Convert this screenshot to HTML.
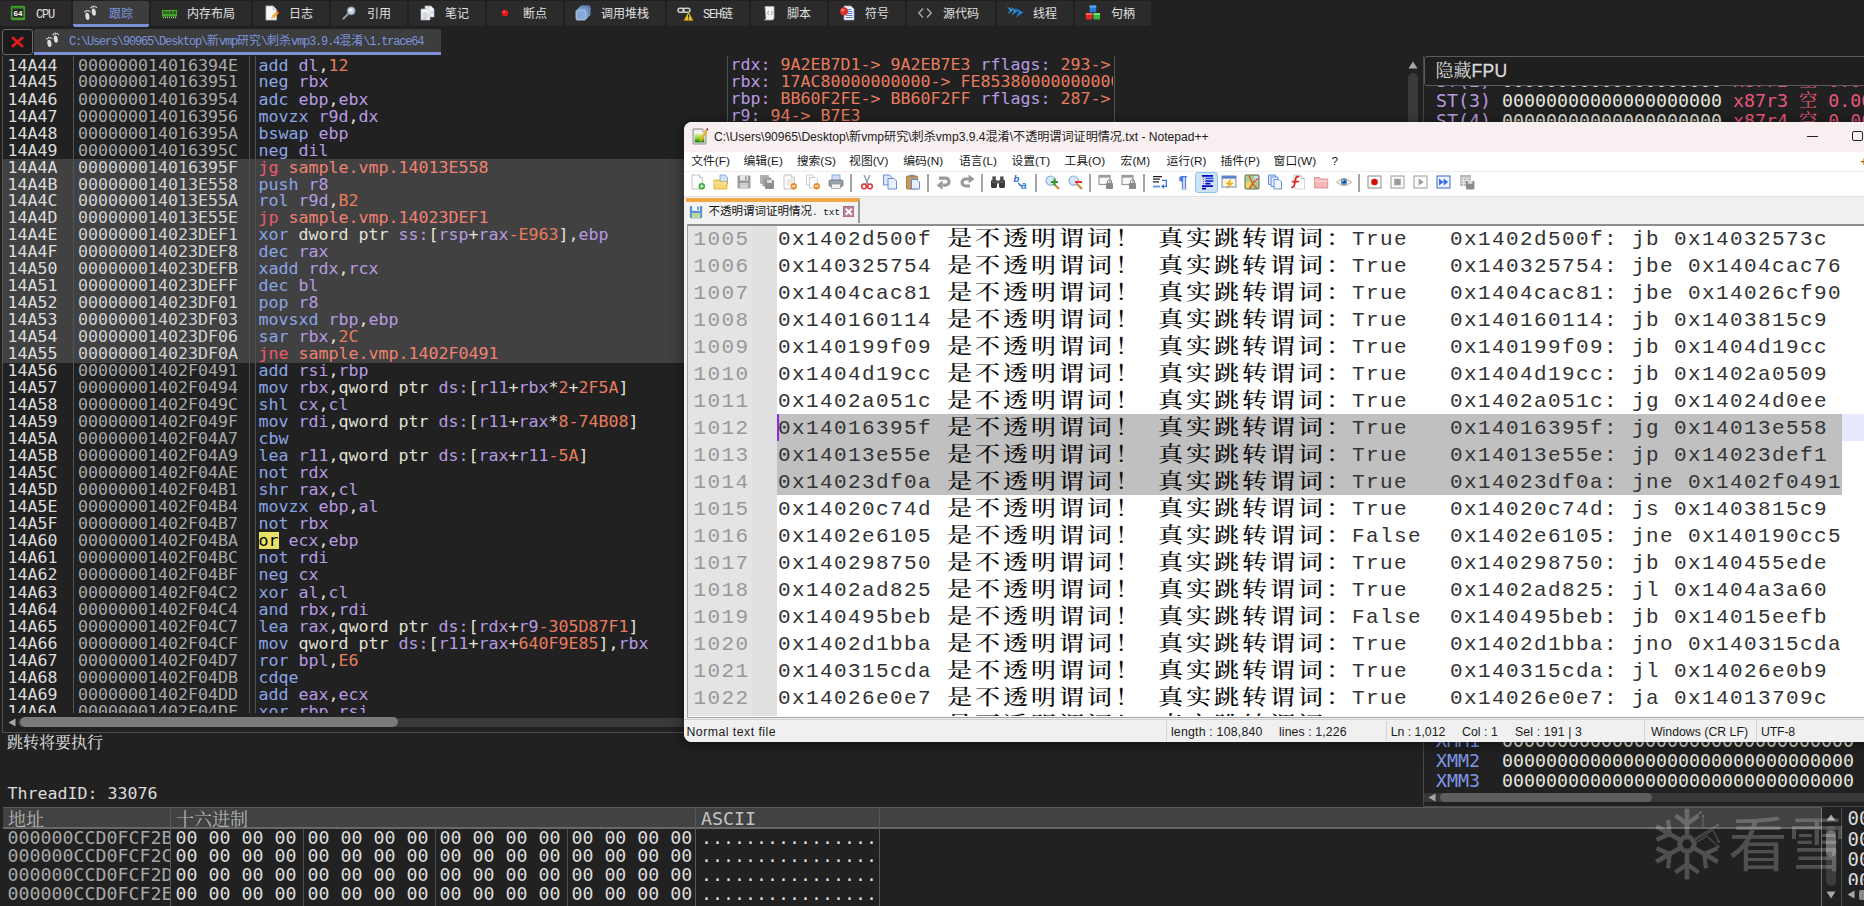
<!DOCTYPE html><html lang="zh"><head><meta charset="utf-8"><title>x64dbg trace</title><style>
*{box-sizing:border-box;margin:0;padding:0}
html,body{width:1864px;height:906px;overflow:hidden;background:#212121}
body{position:relative;font-family:"DejaVu Sans Mono","Liberation Mono","Noto Sans CJK SC",monospace;color:#e0e0e0}
.a{position:absolute}
.m{position:absolute;white-space:pre;font-family:"DejaVu Sans Mono","Liberation Mono","Noto Sans CJK SC",monospace;font-size:16.61px;line-height:17px;height:17px;overflow:visible}
.m2{position:absolute;white-space:pre;font-family:"DejaVu Sans Mono","Liberation Mono","Noto Serif CJK SC",monospace;font-size:18.27px;line-height:20px;height:20px}
.b{color:#8aa5e6}.p{color:#b79be0}.o{color:#e87c5e}.w{color:#e2e2d6}.j{color:#ea5c6c}.t{color:#f08272}.g{color:#a8a8a8}.i{color:#dcdcdc}.gs{color:#d2d2d2}
.hl{background:#e6e268;color:#000;display:inline-block;height:17px;line-height:17px;vertical-align:top}
.tab{position:absolute;top:1px;height:25px;background:#2b2b2b;border-radius:2px}
.tab.sel{background:#3d3d3d;border-bottom:3px solid #7d90d6;height:26px}
.tt{position:absolute;top:0;height:25px;line-height:28.5px;font-size:12px;white-space:pre;color:#e0e0e0;font-family:"Liberation Mono","Noto Sans CJK SC",monospace}
.tt i{font-style:normal;font-size:12px;letter-spacing:-1.2px}
.ui{font-family:"Liberation Sans","Noto Sans CJK SC",sans-serif}
.np{position:absolute;white-space:pre;color:#111}
.ln{position:absolute;white-space:pre;font-family:"Liberation Mono",monospace;font-size:21px;letter-spacing:1.4px;color:#989898;line-height:27px;height:27px}
.ct{position:absolute;white-space:pre;font-family:"Liberation Mono",monospace;font-size:21px;letter-spacing:1.4px;color:#333;line-height:27px;height:27px}
.cj{position:absolute;white-space:pre;font-family:"Liberation Serif","Noto Serif CJK SC",serif;font-size:21px;letter-spacing:2.53px;color:#0c0c0c;font-weight:500;line-height:25.4px;height:27px;transform:scaleX(1.19);transform-origin:0 0}
</style></head><body>
<div class="tab" style="left:0px;width:71px"><span class="tt" style="left:36px"><i>CPU</i></span><svg class="a" style="left:10px;top:4px" width="16" height="16" viewBox="0 0 16 16"><rect x="1" y="1" width="14" height="14" rx="1" fill="#4aa832"/><path d="M0 3h16M0 6h16M0 9h16M0 12h16M3 0v16M6 0v16M9 0v16M12 0v16" stroke="#2f7a20" stroke-width="0.8"/><rect x="2.6" y="3.6" width="10.8" height="8.8" fill="#262626"/><text x="8" y="11.2" font-family="Liberation Sans,sans-serif" font-weight="bold" font-size="8" fill="#fff" text-anchor="middle">64</text></svg></div>
<div class="tab sel" style="left:73px;width:76px"><span class="tt" style="left:36px;color:#7b94de">跟踪</span><svg class="a" style="left:10px;top:4px" width="16" height="16" viewBox="0 0 16 16"><g fill="#dcdcdc"><ellipse cx="4.4" cy="11.4" rx="2" ry="3.7" transform="rotate(-10 4.4 11.4)"/><circle cx="2" cy="6.6" r="0.9"/><circle cx="3.8" cy="5.7" r="0.9"/><circle cx="5.6" cy="5.8" r="0.8"/><circle cx="7" cy="6.6" r="0.7"/><ellipse cx="10.8" cy="7.2" rx="2" ry="3.7" transform="rotate(-10 10.8 7.2)"/><circle cx="8.4" cy="2.4" r="0.9"/><circle cx="10.2" cy="1.5" r="0.9"/><circle cx="12" cy="1.6" r="0.8"/><circle cx="13.4" cy="2.4" r="0.7"/></g></svg></div>
<div class="tab" style="left:151px;width:100px"><span class="tt" style="left:36px">内存布局</span><svg class="a" style="left:10px;top:4px" width="16" height="16" viewBox="0 0 16 16"><rect x="1" y="5" width="15" height="6.5" fill="#4aa832"/><rect x="2.2" y="6.2" width="2.6" height="3" fill="#1f5a16"/><rect x="5.6" y="6.2" width="2.6" height="3" fill="#1f5a16"/><rect x="9" y="6.2" width="2.6" height="3" fill="#1f5a16"/><rect x="12.4" y="6.2" width="2.6" height="3" fill="#1f5a16"/><path d="M2 12.5h1M4 12.5h1M6 12.5h1M8 12.5h1M10 12.5h1M12 12.5h1M14 12.5h1" stroke="#8fd870" stroke-width="1.4"/></svg></div>
<div class="tab" style="left:253px;width:76px"><span class="tt" style="left:36px">日志</span><svg class="a" style="left:10px;top:4px" width="16" height="16" viewBox="0 0 16 16"><path d="M3 1h7l3.5 3.5V15H3z" fill="#f4f6f8" stroke="#b8c0c8" stroke-width="0.8"/><path d="M10 1v3.5h3.5" fill="#d8dee4" stroke="#b8c0c8" stroke-width="0.6"/><path d="M8 14l1-3 5-5 2 2-5 5z" fill="#f0a828"/><path d="M8 14l1-3 2 2z" fill="#e8d8a8"/><path d="M14 6l2 2" stroke="#d04030" stroke-width="1.6"/></svg></div>
<div class="tab" style="left:331px;width:76px"><span class="tt" style="left:36px">引用</span><svg class="a" style="left:10px;top:4px" width="16" height="16" viewBox="0 0 16 16"><circle cx="10.2" cy="5.8" r="3.8" fill="#c8d4e0" stroke="#8a96a4" stroke-width="1.2"/><circle cx="9.4" cy="5" r="1.6" fill="#eef3f8"/><path d="M7.4 8.6L2.4 13.6" stroke="#9aa0a8" stroke-width="2" stroke-linecap="round"/></svg></div>
<div class="tab" style="left:409px;width:76px"><span class="tt" style="left:36px">笔记</span><svg class="a" style="left:10px;top:4px" width="16" height="16" viewBox="0 0 16 16"><path d="M6 1h6l3 3v8H6z" fill="#f2f4f6" stroke="#aab2ba" stroke-width="0.7"/><path d="M2 4h6l3 3v8H2z" fill="#fbfcfd" stroke="#aab2ba" stroke-width="0.7"/><path d="M3.5 8h5M3.5 10h6M3.5 12h6M3.5 13.8h4" stroke="#9aa4b0" stroke-width="0.8"/><path d="M8 2.8h3M12 6h2M12 8h2" stroke="#b4bcc6" stroke-width="0.7"/></svg></div>
<div class="tab" style="left:487px;width:76px"><span class="tt" style="left:36px">断点</span><svg class="a" style="left:10px;top:4px" width="16" height="16" viewBox="0 0 16 16"><circle cx="8" cy="8" r="3.3" fill="#e01818"/><circle cx="7" cy="7" r="1.1" fill="#f87070"/></svg></div>
<div class="tab" style="left:565px;width:100px"><span class="tt" style="left:36px">调用堆栈</span><svg class="a" style="left:10px;top:4px" width="16" height="16" viewBox="0 0 16 16"><rect x="5" y="1" width="10" height="10" rx="1.5" fill="#4a6ea8" stroke="#8fb0e0" stroke-width="0.8"/><rect x="3" y="3" width="10" height="10" rx="1.5" fill="#5a80bc" stroke="#9fc0ea" stroke-width="0.8"/><rect x="1" y="5" width="10" height="10" rx="1.5" fill="#88a8d8" stroke="#c4daf4" stroke-width="0.8"/></svg></div>
<div class="tab" style="left:667px;width:82px"><span class="tt" style="left:36px"><i>SEH</i>链</span><svg class="a" style="left:10px;top:4px" width="16" height="16" viewBox="0 0 16 16"><rect x="1" y="3.2" width="6" height="4" rx="2" fill="none" stroke="#d0d0d0" stroke-width="1.5"/><rect x="6" y="3.2" width="7" height="4" rx="2" fill="none" stroke="#d0d0d0" stroke-width="1.5"/><path d="M11.5 7L16 15.4H7z" fill="#f0c828" stroke="#a88410" stroke-width="0.6"/><path d="M11.5 9.6v3" stroke="#222" stroke-width="1.2"/><circle cx="11.5" cy="14" r="0.7" fill="#222"/></svg></div>
<div class="tab" style="left:751px;width:76px"><span class="tt" style="left:36px">脚本</span><svg class="a" style="left:10px;top:4px" width="16" height="16" viewBox="0 0 16 16"><path d="M4 1.5h9v11.5a2 2 0 01-2 2H3.4a1.6 1.6 0 001.6-1.6z" fill="#f0f2f4" stroke="#b0b8c0" stroke-width="0.7"/><path d="M8 6L6.4 8 8 10M10 6l1.6 2L10 10" fill="none" stroke="#8a94a0" stroke-width="0.9"/></svg></div>
<div class="tab" style="left:829px;width:76px"><span class="tt" style="left:36px">符号</span><svg class="a" style="left:10px;top:4px" width="16" height="16" viewBox="0 0 16 16"><path d="M5 1h7l3 3v11H5z" fill="#f2f5fa" stroke="#98a8c8" stroke-width="0.7"/><path d="M8.5 4.5h4M8.5 6.5h5M8.5 8.5h5M7 10.5h6.5M7 12.5h6.5" stroke="#4a68c8" stroke-width="0.9"/><circle cx="5" cy="6.4" r="4.2" fill="#d83028"/><circle cx="3.8" cy="5" r="1.5" fill="#f08878"/></svg></div>
<div class="tab" style="left:907px;width:88px"><span class="tt" style="left:36px">源代码</span><svg class="a" style="left:10px;top:4px" width="16" height="16" viewBox="0 0 16 16"><path d="M6 3.5L1.8 8 6 12.5M10 3.5L14.2 8 10 12.5" fill="none" stroke="#a8a8a8" stroke-width="1.4"/></svg></div>
<div class="tab" style="left:997px;width:76px"><span class="tt" style="left:36px">线程</span><svg class="a" style="left:10px;top:4px" width="16" height="16" viewBox="0 0 16 16"><path d="M0 1.6l6 3.4-5.4 4.4 2.4-4z" fill="#3aa0ee"/><path d="M3.6 2l7 4-6.6 5 3-4.6z" fill="#2a90e6"/><path d="M7.6 2.6L16.4 7.4 8 13l3.8-5.4z" fill="#1c80de"/></svg></div>
<div class="tab" style="left:1075px;width:76px"><span class="tt" style="left:36px">句柄</span><svg class="a" style="left:10px;top:4px" width="16" height="16" viewBox="0 0 16 16"><rect x="4.6" y="0.6" width="6.6" height="6.6" rx="0.8" fill="#2878e0"/><rect x="0.8" y="8" width="6.6" height="6.6" rx="0.8" fill="#e02828"/><rect x="8.4" y="8" width="6.6" height="6.6" rx="0.8" fill="#38b838"/><path d="M4.6 0.6h6.6v2h-6.6z" fill="#68a8f4"/><path d="M0.8 8h6.6v2H0.8z" fill="#f46868"/><path d="M8.4 8h6.6v2H8.4z" fill="#78e078"/></svg></div>
<div class="a" style="left:2px;top:29px;width:31px;height:26px;border:1px solid #6a6a6a;border-radius:3px;background:#1b1b1b"></div>
<svg class="a" style="left:11px;top:36px" width="13" height="12" viewBox="0 0 13 12"><path d="M2 2 L11 10 M11 2 L2 10" stroke="#e01c1c" stroke-width="3" stroke-linecap="round"/></svg>
<div class="a" style="left:34px;top:29px;width:407px;height:26px;background:#3d3d3d;border-bottom:3px solid #7d90d6;border-radius:2px 2px 0 0"><span class="tt" style="left:35px;color:#7b94de;height:23px;line-height:26.5px"><i>C:\Users\90965\Desktop\</i>新<i>vmp</i>研究<i>\</i>刺杀<i>vmp3.9.4</i>混淆<i>\1.trace64</i></span><svg class="a" style="left:11px;top:3px" width="16" height="16" viewBox="0 0 16 16"><g fill="#dcdcdc"><ellipse cx="4.4" cy="11.4" rx="2" ry="3.7" transform="rotate(-10 4.4 11.4)"/><circle cx="2" cy="6.6" r="0.9"/><circle cx="3.8" cy="5.7" r="0.9"/><circle cx="5.6" cy="5.8" r="0.8"/><circle cx="7" cy="6.6" r="0.7"/><ellipse cx="10.8" cy="7.2" rx="2" ry="3.7" transform="rotate(-10 10.8 7.2)"/><circle cx="8.4" cy="2.4" r="0.9"/><circle cx="10.2" cy="1.5" r="0.9"/><circle cx="12" cy="1.6" r="0.8"/><circle cx="13.4" cy="2.4" r="0.7"/></g></svg></div>
<div class="a" id="trace" style="left:0;top:56px;width:1404px;height:657px;overflow:hidden">
<div class="a" style="left:3px;top:103px;width:1401px;height:203.5px;background:#414141"></div>
<div class="a" style="left:2px;top:0;width:1px;height:658px;background:#515151"></div>
<div class="a" style="left:73px;top:0;width:1px;height:658px;background:#515151"></div>
<div class="a" style="left:248.5px;top:0;width:1px;height:658px;background:#515151"></div>
<div class="a" style="left:254.5px;top:0;width:1px;height:658px;background:#515151"></div>
<div class="a" style="left:726.6px;top:0;width:1px;height:658px;background:#515151"></div>
<div class="a" style="left:1113.6px;top:0;width:1px;height:658px;background:#515151"></div>
<div class="m i" style="left:7.4px;top:0.5px">14A44</div><div class="m g" style="left:78px;top:0.5px">000000014016394E</div><div class="m" style="left:258.6px;top:0.5px"><span class="b">add</span> <span class="p">dl</span><span class="w">,</span><span class="o">12</span></div>
<div class="m i" style="left:7.4px;top:17.4px">14A45</div><div class="m g" style="left:78px;top:17.4px">0000000140163951</div><div class="m" style="left:258.6px;top:17.4px"><span class="b">neg</span> <span class="p">rbx</span></div>
<div class="m i" style="left:7.4px;top:34.5px">14A46</div><div class="m g" style="left:78px;top:34.5px">0000000140163954</div><div class="m" style="left:258.6px;top:34.5px"><span class="b">adc</span> <span class="p">ebp</span><span class="w">,</span><span class="p">ebx</span></div>
<div class="m i" style="left:7.4px;top:51.5px">14A47</div><div class="m g" style="left:78px;top:51.5px">0000000140163956</div><div class="m" style="left:258.6px;top:51.5px"><span class="b">movzx</span> <span class="p">r9d</span><span class="w">,</span><span class="p">dx</span></div>
<div class="m i" style="left:7.4px;top:68.5px">14A48</div><div class="m g" style="left:78px;top:68.5px">000000014016395A</div><div class="m" style="left:258.6px;top:68.5px"><span class="b">bswap</span> <span class="p">ebp</span></div>
<div class="m i" style="left:7.4px;top:85.5px">14A49</div><div class="m g" style="left:78px;top:85.5px">000000014016395C</div><div class="m" style="left:258.6px;top:85.5px"><span class="b">neg</span> <span class="p">dil</span></div>
<div class="m i" style="left:7.4px;top:102.5px">14A4A</div><div class="m gs" style="left:78px;top:102.5px">000000014016395F</div><div class="m" style="left:258.6px;top:102.5px"><span class="j">jg</span> <span class="t">sample.vmp.14013E558</span></div>
<div class="m i" style="left:7.4px;top:119.5px">14A4B</div><div class="m gs" style="left:78px;top:119.5px">000000014013E558</div><div class="m" style="left:258.6px;top:119.5px"><span class="b">push</span> <span class="p">r8</span></div>
<div class="m i" style="left:7.4px;top:136.4px">14A4C</div><div class="m gs" style="left:78px;top:136.4px">000000014013E55A</div><div class="m" style="left:258.6px;top:136.4px"><span class="b">rol</span> <span class="p">r9d</span><span class="w">,</span><span class="o">B2</span></div>
<div class="m i" style="left:7.4px;top:153.4px">14A4D</div><div class="m gs" style="left:78px;top:153.4px">000000014013E55E</div><div class="m" style="left:258.6px;top:153.4px"><span class="j">jp</span> <span class="t">sample.vmp.14023DEF1</span></div>
<div class="m i" style="left:7.4px;top:170.4px">14A4E</div><div class="m gs" style="left:78px;top:170.4px">000000014023DEF1</div><div class="m" style="left:258.6px;top:170.4px"><span class="b">xor</span> <span class="w">dword ptr</span><span class="w"> </span><span class="p">ss</span><span class="p">:</span><span class="w">[</span><span class="p">rsp</span><span class="w">+</span><span class="p">rax</span><span class="o">-</span><span class="o">E963</span><span class="w">]</span><span class="w">,</span><span class="p">ebp</span></div>
<div class="m i" style="left:7.4px;top:187.4px">14A4F</div><div class="m gs" style="left:78px;top:187.4px">000000014023DEF8</div><div class="m" style="left:258.6px;top:187.4px"><span class="b">dec</span> <span class="p">rax</span></div>
<div class="m i" style="left:7.4px;top:204.4px">14A50</div><div class="m gs" style="left:78px;top:204.4px">000000014023DEFB</div><div class="m" style="left:258.6px;top:204.4px"><span class="b">xadd</span> <span class="p">rdx</span><span class="w">,</span><span class="p">rcx</span></div>
<div class="m i" style="left:7.4px;top:221.4px">14A51</div><div class="m gs" style="left:78px;top:221.4px">000000014023DEFF</div><div class="m" style="left:258.6px;top:221.4px"><span class="b">dec</span> <span class="p">bl</span></div>
<div class="m i" style="left:7.4px;top:238.4px">14A52</div><div class="m gs" style="left:78px;top:238.4px">000000014023DF01</div><div class="m" style="left:258.6px;top:238.4px"><span class="b">pop</span> <span class="p">r8</span></div>
<div class="m i" style="left:7.4px;top:255.4px">14A53</div><div class="m gs" style="left:78px;top:255.4px">000000014023DF03</div><div class="m" style="left:258.6px;top:255.4px"><span class="b">movsxd</span> <span class="p">rbp</span><span class="w">,</span><span class="p">ebp</span></div>
<div class="m i" style="left:7.4px;top:272.4px">14A54</div><div class="m gs" style="left:78px;top:272.4px">000000014023DF06</div><div class="m" style="left:258.6px;top:272.4px"><span class="b">sar</span> <span class="p">rbx</span><span class="w">,</span><span class="o">2C</span></div>
<div class="m i" style="left:7.4px;top:289.4px">14A55</div><div class="m gs" style="left:78px;top:289.4px">000000014023DF0A</div><div class="m" style="left:258.6px;top:289.4px"><span class="j">jne</span> <span class="t">sample.vmp.1402F0491</span></div>
<div class="m i" style="left:7.4px;top:306.4px">14A56</div><div class="m g" style="left:78px;top:306.4px">00000001402F0491</div><div class="m" style="left:258.6px;top:306.4px"><span class="b">add</span> <span class="p">rsi</span><span class="w">,</span><span class="p">rbp</span></div>
<div class="m i" style="left:7.4px;top:323.4px">14A57</div><div class="m g" style="left:78px;top:323.4px">00000001402F0494</div><div class="m" style="left:258.6px;top:323.4px"><span class="b">mov</span> <span class="p">rbx</span><span class="w">,</span><span class="w">qword ptr</span><span class="w"> </span><span class="p">ds</span><span class="p">:</span><span class="w">[</span><span class="p">r11</span><span class="w">+</span><span class="p">rbx</span><span class="w">*</span><span class="o">2</span><span class="w">+</span><span class="o">2F5A</span><span class="w">]</span></div>
<div class="m i" style="left:7.4px;top:340.4px">14A58</div><div class="m g" style="left:78px;top:340.4px">00000001402F049C</div><div class="m" style="left:258.6px;top:340.4px"><span class="b">shl</span> <span class="p">cx</span><span class="w">,</span><span class="p">cl</span></div>
<div class="m i" style="left:7.4px;top:357.4px">14A59</div><div class="m g" style="left:78px;top:357.4px">00000001402F049F</div><div class="m" style="left:258.6px;top:357.4px"><span class="b">mov</span> <span class="p">rdi</span><span class="w">,</span><span class="w">qword ptr</span><span class="w"> </span><span class="p">ds</span><span class="p">:</span><span class="w">[</span><span class="p">r11</span><span class="w">+</span><span class="p">rax</span><span class="w">*</span><span class="o">8</span><span class="o">-</span><span class="o">74B08</span><span class="w">]</span></div>
<div class="m i" style="left:7.4px;top:374.4px">14A5A</div><div class="m g" style="left:78px;top:374.4px">00000001402F04A7</div><div class="m" style="left:258.6px;top:374.4px"><span class="b">cbw</span></div>
<div class="m i" style="left:7.4px;top:391.4px">14A5B</div><div class="m g" style="left:78px;top:391.4px">00000001402F04A9</div><div class="m" style="left:258.6px;top:391.4px"><span class="b">lea</span> <span class="p">r11</span><span class="w">,</span><span class="w">qword ptr</span><span class="w"> </span><span class="p">ds</span><span class="p">:</span><span class="w">[</span><span class="p">rax</span><span class="w">+</span><span class="p">r11</span><span class="o">-</span><span class="o">5A</span><span class="w">]</span></div>
<div class="m i" style="left:7.4px;top:408.4px">14A5C</div><div class="m g" style="left:78px;top:408.4px">00000001402F04AE</div><div class="m" style="left:258.6px;top:408.4px"><span class="b">not</span> <span class="p">rdx</span></div>
<div class="m i" style="left:7.4px;top:425.4px">14A5D</div><div class="m g" style="left:78px;top:425.4px">00000001402F04B1</div><div class="m" style="left:258.6px;top:425.4px"><span class="b">shr</span> <span class="p">rax</span><span class="w">,</span><span class="p">cl</span></div>
<div class="m i" style="left:7.4px;top:442.4px">14A5E</div><div class="m g" style="left:78px;top:442.4px">00000001402F04B4</div><div class="m" style="left:258.6px;top:442.4px"><span class="b">movzx</span> <span class="p">ebp</span><span class="w">,</span><span class="p">al</span></div>
<div class="m i" style="left:7.4px;top:459.4px">14A5F</div><div class="m g" style="left:78px;top:459.4px">00000001402F04B7</div><div class="m" style="left:258.6px;top:459.4px"><span class="b">not</span> <span class="p">rbx</span></div>
<div class="m i" style="left:7.4px;top:476.4px">14A60</div><div class="m g" style="left:78px;top:476.4px">00000001402F04BA</div><div class="m" style="left:258.6px;top:476.4px"><span class="hl">or</span> <span class="p">ecx</span><span class="w">,</span><span class="p">ebp</span></div>
<div class="m i" style="left:7.4px;top:493.4px">14A61</div><div class="m g" style="left:78px;top:493.4px">00000001402F04BC</div><div class="m" style="left:258.6px;top:493.4px"><span class="b">not</span> <span class="p">rdi</span></div>
<div class="m i" style="left:7.4px;top:510.4px">14A62</div><div class="m g" style="left:78px;top:510.4px">00000001402F04BF</div><div class="m" style="left:258.6px;top:510.4px"><span class="b">neg</span> <span class="p">cx</span></div>
<div class="m i" style="left:7.4px;top:527.5px">14A63</div><div class="m g" style="left:78px;top:527.5px">00000001402F04C2</div><div class="m" style="left:258.6px;top:527.5px"><span class="b">xor</span> <span class="p">al</span><span class="w">,</span><span class="p">cl</span></div>
<div class="m i" style="left:7.4px;top:544.5px">14A64</div><div class="m g" style="left:78px;top:544.5px">00000001402F04C4</div><div class="m" style="left:258.6px;top:544.5px"><span class="b">and</span> <span class="p">rbx</span><span class="w">,</span><span class="p">rdi</span></div>
<div class="m i" style="left:7.4px;top:561.5px">14A65</div><div class="m g" style="left:78px;top:561.5px">00000001402F04C7</div><div class="m" style="left:258.6px;top:561.5px"><span class="b">lea</span> <span class="p">rax</span><span class="w">,</span><span class="w">qword ptr</span><span class="w"> </span><span class="p">ds</span><span class="p">:</span><span class="w">[</span><span class="p">rdx</span><span class="w">+</span><span class="p">r9</span><span class="o">-</span><span class="o">305D87F1</span><span class="w">]</span></div>
<div class="m i" style="left:7.4px;top:578.5px">14A66</div><div class="m g" style="left:78px;top:578.5px">00000001402F04CF</div><div class="m" style="left:258.6px;top:578.5px"><span class="b">mov</span> <span class="w">qword ptr</span><span class="w"> </span><span class="p">ds</span><span class="p">:</span><span class="w">[</span><span class="p">r11</span><span class="w">+</span><span class="p">rax</span><span class="w">+</span><span class="o">640F9E85</span><span class="w">]</span><span class="w">,</span><span class="p">rbx</span></div>
<div class="m i" style="left:7.4px;top:595.5px">14A67</div><div class="m g" style="left:78px;top:595.5px">00000001402F04D7</div><div class="m" style="left:258.6px;top:595.5px"><span class="b">ror</span> <span class="p">bpl</span><span class="w">,</span><span class="o">E6</span></div>
<div class="m i" style="left:7.4px;top:612.5px">14A68</div><div class="m g" style="left:78px;top:612.5px">00000001402F04DB</div><div class="m" style="left:258.6px;top:612.5px"><span class="b">cdqe</span></div>
<div class="m i" style="left:7.4px;top:629.5px">14A69</div><div class="m g" style="left:78px;top:629.5px">00000001402F04DD</div><div class="m" style="left:258.6px;top:629.5px"><span class="b">add</span> <span class="p">eax</span><span class="w">,</span><span class="p">ecx</span></div>
<div class="m i" style="left:7.4px;top:646.5px">14A6A</div><div class="m g" style="left:78px;top:646.5px">00000001402F04DF</div><div class="m" style="left:258.6px;top:646.5px"><span class="b">xor</span> <span class="p">rbp</span><span class="w">,</span><span class="p">rsi</span></div>
<div class="a" style="left:728px;top:0;width:385px;height:120px;overflow:hidden">
<div class="m" style="left:2.6px;top:0.2px"><span class="p">rdx: </span><span class="o">9A2EB7D1-&gt; 9A2EB7E3 </span><span class="p">rflags: </span><span class="o">293-&gt;</span></div>
<div class="m" style="left:2.6px;top:17.1px"><span class="p">rbx: </span><span class="o">17AC80000000000-&gt; FE85380000000000</span></div>
<div class="m" style="left:2.6px;top:34.2px"><span class="p">rbp: </span><span class="o">BB60F2FE-&gt; BB60F2FF </span><span class="p">rflags: </span><span class="o">287-&gt;</span></div>
<div class="m" style="left:2.6px;top:51.2px"><span class="p">r9: </span><span class="o">94-&gt; B7E3</span></div>
</div>
</div>
<div class="a" style="left:1408px;top:73px;width:10px;height:640px;background:#3a3a3a;border-radius:5px"></div>
<svg class="a" style="left:1408px;top:61px" width="10" height="8" viewBox="0 0 10 8"><path d="M5 0.5 L9.5 7.5 L0.5 7.5 Z" fill="#a8a8a8"/></svg>
<div class="a" style="left:18px;top:717.5px;width:1388px;height:9.5px;background:#3a3a3a;border-radius:5px"></div>
<div class="a" style="left:20px;top:717px;width:378px;height:10px;background:#7a7a7a;border-radius:5px"></div>
<svg class="a" style="left:8px;top:718px" width="8" height="9" viewBox="0 0 8 9"><path d="M0.5 4.5 L7.5 0.5 L7.5 8.5 Z" fill="#a8a8a8"/></svg>
<div class="a" style="left:2px;top:731.6px;width:1420px;height:1px;background:#4c4c4c"></div>
<div class="a" style="left:2px;top:713px;width:1px;height:19px;background:#515151"></div>
<div class="a" style="left:7px;top:731px;font-family:'Noto Serif CJK SC',serif;font-size:16px;line-height:21px;color:#e4e4e4;white-space:pre">跳转将要执行</div>
<div class="m i" style="left:7.4px;top:784.8px">ThreadID: 33076</div>
<div class="a" style="left:3px;top:807px;width:1819px;height:1px;background:#5a5a5a"></div>
<div class="a" style="left:3px;top:808px;width:1819px;height:19px;background:#424242"></div>
<div class="a" style="left:3px;top:827.4px;width:1819px;height:1.4px;background:#686868"></div>
<div class="a" style="left:1821px;top:808px;width:1px;height:98px;background:#707070"></div>
<div class="a" style="left:170px;top:809px;width:1px;height:97px;background:#585858"></div>
<div class="a" style="left:695px;top:809px;width:1px;height:97px;background:#585858"></div>
<div class="a" style="left:879px;top:809px;width:1px;height:97px;background:#585858"></div>
<div class="a" style="left:303px;top:829px;width:1px;height:77px;background:#505050"></div>
<div class="a" style="left:435px;top:829px;width:1px;height:77px;background:#505050"></div>
<div class="a" style="left:567px;top:829px;width:1px;height:77px;background:#505050"></div>
<div class="a" style="left:8px;top:808px;font-family:'Noto Serif CJK SC',serif;font-size:18px;line-height:20px;color:#b4b4b4;white-space:pre">地址</div>
<div class="a" style="left:176px;top:808px;font-family:'Noto Serif CJK SC',serif;font-size:18px;line-height:20px;color:#b4b4b4;white-space:pre">十六进制</div>
<div class="m2" style="left:701px;top:808.5px;color:#c4c4c4">ASCII</div>
<div class="a" style="left:0;top:828px;width:1821px;height:78px;overflow:hidden">
<div class="a" style="left:0;top:-0.30px;width:170px;height:20px;overflow:hidden"><div class="m2 g" style="left:7.5px;top:0">000000CCD0FCF2B0</div></div>
<div class="m2 i" style="left:175.5px;top:-0.30px">00 00 00 00 00 00 00 00 00 00 00 00 00 00 00 00</div>
<div class="m2 i" style="left:701px;top:-0.30px">................</div>
<div class="a" style="left:0;top:18.42px;width:170px;height:20px;overflow:hidden"><div class="m2 g" style="left:7.5px;top:0">000000CCD0FCF2C0</div></div>
<div class="m2 i" style="left:175.5px;top:18.42px">00 00 00 00 00 00 00 00 00 00 00 00 00 00 00 00</div>
<div class="m2 i" style="left:701px;top:18.42px">................</div>
<div class="a" style="left:0;top:37.14px;width:170px;height:20px;overflow:hidden"><div class="m2 g" style="left:7.5px;top:0">000000CCD0FCF2D0</div></div>
<div class="m2 i" style="left:175.5px;top:37.14px">00 00 00 00 00 00 00 00 00 00 00 00 00 00 00 00</div>
<div class="m2 i" style="left:701px;top:37.14px">................</div>
<div class="a" style="left:0;top:55.86px;width:170px;height:20px;overflow:hidden"><div class="m2 g" style="left:7.5px;top:0">000000CCD0FCF2E0</div></div>
<div class="m2 i" style="left:175.5px;top:55.86px">00 00 00 00 00 00 00 00 00 00 00 00 00 00 00 00</div>
<div class="m2 i" style="left:701px;top:55.86px">................</div>
</div>
<svg class="a" style="left:1826px;top:814px" width="10" height="7" viewBox="0 0 10 7"><path d="M5 0.5 L9.5 6.5 L0.5 6.5 Z" fill="#a8a8a8"/></svg>
<div class="a" style="left:1826px;top:826px;width:10px;height:60px;background:#3c3c3c;border-radius:5px"></div>
<div class="a" style="left:1826px;top:830px;width:10px;height:27px;background:#6e6e6e;border-radius:5px"></div>
<svg class="a" style="left:1826px;top:891px" width="10" height="8" viewBox="0 0 10 8"><path d="M5 7.5 L9.5 0.5 L0.5 0.5 Z" fill="#a8a8a8"/></svg>
<div class="a" style="left:1841px;top:808px;width:1px;height:98px;background:#4a4a4a"></div>
<div class="a i" style="left:1847.5px;top:808.2px;font-size:19px;line-height:21px;white-space:pre;font-family:'DejaVu Sans Mono',monospace">00</div>
<div class="a i" style="left:1847.5px;top:828.8px;font-size:19px;line-height:21px;white-space:pre;font-family:'DejaVu Sans Mono',monospace">00</div>
<div class="a i" style="left:1847.5px;top:849.3px;font-size:19px;line-height:21px;white-space:pre;font-family:'DejaVu Sans Mono',monospace">00</div>
<div class="a i" style="left:1847.5px;top:869.9px;font-size:19px;line-height:21px;white-space:pre;font-family:'DejaVu Sans Mono',monospace">00</div>
<div class="a" style="left:1842px;top:885px;width:22px;height:21px;background:#212121"></div>
<svg class="a" style="left:1847px;top:890px" width="8" height="9" viewBox="0 0 8 9"><path d="M0.5 4.5 L7.5 0.5 L7.5 8.5 Z" fill="#a8a8a8"/></svg>
<div class="a" style="left:1859px;top:890px;width:8px;height:10px;background:#8a8a8a;border-radius:2px"></div>
<div class="a" style="left:1423px;top:56px;width:1px;height:751px;background:#474747"></div>
<div class="a" style="left:1424px;top:86px;width:440px;height:706px;overflow:hidden">
<div class="m2" style="left:12px;top:-15.2px"><span style="color:#b79be0">ST(2) </span><span style="color:#e4e4dc">00000000000000000000 </span><span style="color:#e8587a">x87r2 空 0.000000000000</span></div>
<div class="m2" style="left:12px;top:4.8px"><span style="color:#b79be0">ST(3) </span><span style="color:#e4e4dc">00000000000000000000 </span><span style="color:#e8587a">x87r3 空 0.000000000000</span></div>
<div class="m2" style="left:12px;top:24.8px"><span style="color:#b79be0">ST(4) </span><span style="color:#e4e4dc">00000000000000000000 </span><span style="color:#e8587a">x87r4 空 0.000000000000</span></div>
<div class="m2" style="left:12px;top:644.8px"><span style="color:#7f97e6">XMM1  </span><span style="color:#e4e4dc">00000000000000000000000000000000</span></div>
<div class="m2" style="left:12px;top:664.8px"><span style="color:#7f97e6">XMM2  </span><span style="color:#e4e4dc">00000000000000000000000000000000</span></div>
<div class="m2" style="left:12px;top:684.8px"><span style="color:#7f97e6">XMM3  </span><span style="color:#e4e4dc">00000000000000000000000000000000</span></div>
</div>
<div class="a" style="left:1424px;top:56px;width:450px;height:30px;border:1px solid #5c5c5c;border-radius:3px;background:#1f1f1f"></div>
<div class="a" style="left:1435.5px;top:58px;line-height:26px;font-size:18px;color:#d8d8d8;white-space:pre;font-family:'Liberation Sans','Noto Serif CJK SC',sans-serif">隐藏<span style="font-size:17.5px;letter-spacing:.3px;-webkit-text-stroke:.35px #d8d8d8">FPU</span></div>
<div class="a" style="left:1424px;top:792.5px;width:440px;height:9.5px;background:#383838"></div>
<div class="a" style="left:1440px;top:793px;width:212px;height:9px;background:#5e5e5e;border-radius:5px"></div>
<svg class="a" style="left:1428px;top:793px" width="8" height="9" viewBox="0 0 8 9"><path d="M0.5 4.5 L7.5 0.5 L7.5 8.5 Z" fill="#a8a8a8"/></svg>
<div class="a" style="left:1424px;top:806px;width:440px;height:1px;background:#4a4a4a"></div>
<div class="a" id="npp" style="left:684px;top:122px;width:1200px;height:620px;border-radius:8px;background:#f0f0f0;overflow:hidden;box-shadow:0 2px 14px 2px rgba(0,0,0,.38)">
<div class="a" style="left:0;top:0;width:1200px;height:30px;background:#f8eff0"></div>
<div class="a ui" id="nptitle" style="left:30px;top:7px;font-size:12.1px;line-height:16px;color:#1c1c1c;white-space:pre">C:\Users\90965\Desktop\新vmp研究\刺杀vmp3.9.4混淆\不透明谓词证明情况.txt - Notepad++</div>
<div class="a" style="left:1123px;top:14px;width:11px;height:1px;background:#222"></div>
<div class="a" style="left:1168px;top:9px;width:11px;height:10px;border:1px solid #222;border-radius:2px"></div>
<div class="a" style="left:0;top:30px;width:1200px;height:19px;background:#fff"></div>
<div class="a ui mn" style="left:7.2px;top:31px;font-size:11.8px;line-height:17px;color:#1a1a1a;white-space:pre">文件(F)</div>
<div class="a ui mn" style="left:59.5px;top:31px;font-size:11.8px;line-height:17px;color:#1a1a1a;white-space:pre">编辑(E)</div>
<div class="a ui mn" style="left:112.7px;top:31px;font-size:11.8px;line-height:17px;color:#1a1a1a;white-space:pre">搜索(S)</div>
<div class="a ui mn" style="left:165.1px;top:31px;font-size:11.8px;line-height:17px;color:#1a1a1a;white-space:pre">视图(V)</div>
<div class="a ui mn" style="left:219.2px;top:31px;font-size:11.8px;line-height:17px;color:#1a1a1a;white-space:pre">编码(N)</div>
<div class="a ui mn" style="left:275.0px;top:31px;font-size:11.8px;line-height:17px;color:#1a1a1a;white-space:pre">语言(L)</div>
<div class="a ui mn" style="left:327.5px;top:31px;font-size:11.8px;line-height:17px;color:#1a1a1a;white-space:pre">设置(T)</div>
<div class="a ui mn" style="left:380.5px;top:31px;font-size:11.8px;line-height:17px;color:#1a1a1a;white-space:pre">工具(O)</div>
<div class="a ui mn" style="left:436.6px;top:31px;font-size:11.8px;line-height:17px;color:#1a1a1a;white-space:pre">宏(M)</div>
<div class="a ui mn" style="left:482.5px;top:31px;font-size:11.8px;line-height:17px;color:#1a1a1a;white-space:pre">运行(R)</div>
<div class="a ui mn" style="left:536.5px;top:31px;font-size:11.8px;line-height:17px;color:#1a1a1a;white-space:pre">插件(P)</div>
<div class="a ui mn" style="left:589.6px;top:31px;font-size:11.8px;line-height:17px;color:#1a1a1a;white-space:pre">窗口(W)</div>
<div class="a ui mn" style="left:647.5px;top:31px;font-size:11.8px;line-height:17px;color:#1a1a1a;white-space:pre">?</div>
<div class="a ui" style="left:1176.5px;top:31px;font-size:13px;line-height:17px;color:#8a5a10;font-weight:bold">+</div>
<div class="a" style="left:0;top:49px;width:1200px;height:26px;background:#fff;border-top:1px solid #ececec"></div>
<div class="a" style="left:511px;top:49.6px;width:22.5px;height:21px;background:#cce4f7;border:1px solid #8fc2ee;border-radius:3px"></div><svg class="a" style="left:6px;top:52.19999999999999px" width="16" height="16" viewBox="0 0 16 16"><path d="M2 1h7.4l3 3v11H2z" fill="#fdfdfd" stroke="#b4b4b4" stroke-width="0.8"/><path d="M9.4 1v3h3" fill="#e8e8e8" stroke="#b4b4b4" stroke-width="0.6"/><circle cx="11.8" cy="12.2" r="3.2" fill="#3aa83a"/><path d="M10 12.2h3.6M11.8 10.4v3.6" stroke="#fff" stroke-width="1.1"/></svg><svg class="a" style="left:29px;top:52.19999999999999px" width="16" height="16" viewBox="0 0 16 16"><path d="M7 1h5l2.5 2.5V10H7z" fill="#cfe0f8" stroke="#7a9ad0" stroke-width="0.8"/><path d="M1 6h5l1 1.4h7V15H1z" fill="#f6d878" stroke="#d8a830" stroke-width="0.8"/><path d="M1 9h13" stroke="#fbe9a8" stroke-width="1"/></svg><svg class="a" style="left:52px;top:52.19999999999999px" width="16" height="16" viewBox="0 0 16 16"><rect x="1.5" y="1.5" width="13" height="13" rx="1" fill="#9a9a9a"/><rect x="4" y="1.5" width="8" height="5" fill="#e6e6e6"/><rect x="3.6" y="9" width="8.8" height="5.5" fill="#d0d0d0"/><rect x="9" y="2.4" width="1.8" height="3.2" fill="#9a9a9a"/></svg><svg class="a" style="left:75px;top:52.19999999999999px" width="16" height="16" viewBox="0 0 16 16"><rect x="1" y="1" width="9" height="9" rx="1" fill="#b0b0b0"/><rect x="3.5" y="3.5" width="9" height="9" rx="1" fill="#a2a2a2"/><rect x="6" y="6" width="9" height="9" rx="1" fill="#8e8e8e"/><rect x="8" y="6" width="5" height="3" fill="#dcdcdc"/></svg><svg class="a" style="left:98px;top:52.19999999999999px" width="16" height="16" viewBox="0 0 16 16"><path d="M2 1h7.4l3 3v11H2z" fill="#fdfdfd" stroke="#b4b4b4" stroke-width="0.8"/><path d="M9.4 1v3h3" fill="#e8e8e8" stroke="#b4b4b4" stroke-width="0.6"/><path d="M5 6h6M5 8h6M5 10h4" stroke="#c8c8c8" stroke-width="0.8"/><circle cx="11.8" cy="12.2" r="3.2" fill="#f08a28"/><path d="M10 12.2h3.6" stroke="#fff" stroke-width="1.2"/></svg><svg class="a" style="left:121px;top:52.19999999999999px" width="16" height="16" viewBox="0 0 16 16"><path d="M1.5 1h6l2 2v8h-8z" fill="#fdfdfd" stroke="#b8b8b8" stroke-width="0.7"/><path d="M4.5 3.5h6l2 2v8.5h-8z" fill="#fdfdfd" stroke="#b8b8b8" stroke-width="0.7"/><circle cx="11.8" cy="12.2" r="3.2" fill="#f08a28"/><path d="M10 12.2h3.6" stroke="#fff" stroke-width="1.2"/></svg><svg class="a" style="left:144px;top:52.19999999999999px" width="16" height="16" viewBox="0 0 16 16"><rect x="4" y="1" width="8" height="6" fill="#cfe0f8" stroke="#7a9ad0" stroke-width="0.8"/><rect x="1" y="6" width="14" height="6.5" rx="1.5" fill="#9aa4b0" stroke="#6a7480" stroke-width="0.8"/><rect x="3.6" y="10" width="8.8" height="4.6" fill="#f4f4f4" stroke="#8a8a8a" stroke-width="0.7"/></svg><svg class="a" style="left:175px;top:52.19999999999999px" width="16" height="16" viewBox="0 0 16 16"><path d="M5 1l4.2 9M11 1L6.8 10" stroke="#8a96a8" stroke-width="1.3"/><circle cx="5" cy="12.4" r="2.3" fill="none" stroke="#e03030" stroke-width="1.5"/><circle cx="11" cy="12.4" r="2.3" fill="none" stroke="#e03030" stroke-width="1.5"/></svg><svg class="a" style="left:198px;top:52.19999999999999px" width="16" height="16" viewBox="0 0 16 16"><path d="M1.5 1h6l2.5 2.5V11h-8.5z" fill="#dce8fa" stroke="#5a82d0" stroke-width="0.9"/><path d="M6 4.5h6l2.5 2.5V15H6z" fill="#e8f0fc" stroke="#5a82d0" stroke-width="0.9"/></svg><svg class="a" style="left:221px;top:52.19999999999999px" width="16" height="16" viewBox="0 0 16 16"><rect x="1.5" y="2" width="11" height="13" rx="1" fill="#c89a58" stroke="#946828" stroke-width="0.8"/><rect x="4.5" y="0.8" width="5" height="2.6" rx="0.8" fill="#8a8a8a"/><path d="M6.5 5.5h5.5l2.5 2.5V15H6.5z" fill="#e8f0fc" stroke="#5a82d0" stroke-width="0.9"/></svg><svg class="a" style="left:252px;top:52.19999999999999px" width="16" height="16" viewBox="0 0 16 16"><path d="M3 4.2h6.6a3.5 3.5 0 010 7H7" fill="none" stroke="#9a9a9a" stroke-width="3.2"/><path d="M0.6 11.2l6-4.6v9.2z" fill="#9a9a9a"/></svg><svg class="a" style="left:275px;top:52.19999999999999px" width="16" height="16" viewBox="0 0 16 16"><path d="M11 5H6.6a3.5 3.5 0 000 7H11" fill="none" stroke="#9a9a9a" stroke-width="3.2"/><path d="M15.6 5l-6-4.6v9.2z" fill="#9a9a9a"/></svg><svg class="a" style="left:306px;top:52.19999999999999px" width="16" height="16" viewBox="0 0 16 16"><rect x="1" y="6" width="6" height="8" rx="1.4" fill="#3a3a3a"/><rect x="9" y="6" width="6" height="8" rx="1.4" fill="#3a3a3a"/><rect x="2.4" y="2.4" width="3.4" height="4" fill="#4a4a4a"/><rect x="10.2" y="2.4" width="3.4" height="4" fill="#4a4a4a"/><rect x="6.4" y="6.5" width="3.2" height="3" fill="#5a5a5a"/><path d="M2 8h4M10 8h4" stroke="#8a8a8a" stroke-width="0.8"/></svg><svg class="a" style="left:329px;top:52.19999999999999px" width="16" height="16" viewBox="0 0 16 16"><text x="0.5" y="8" font-family="Liberation Sans,sans-serif" font-weight="bold" font-style="italic" font-size="9.5" fill="#2a68d0">b</text><text x="8" y="15" font-family="Liberation Sans,sans-serif" font-weight="bold" font-style="italic" font-size="10" fill="#2a88e0">a</text><path d="M5.5 8.6q1 3.4 3.6 3" fill="none" stroke="#1a50b0" stroke-width="1.1"/></svg><svg class="a" style="left:360px;top:52.19999999999999px" width="16" height="16" viewBox="0 0 16 16"><circle cx="6.6" cy="6.6" r="4.6" fill="#d4e6f8" stroke="#8ab0d8" stroke-width="1.2"/><path d="M10 10l4.4 4.4" stroke="#c89040" stroke-width="2.2" stroke-linecap="round"/><path d="M7 8h7M10.5 4.5v7" stroke="#2a9a2a" stroke-width="2"/></svg><svg class="a" style="left:383px;top:52.19999999999999px" width="16" height="16" viewBox="0 0 16 16"><circle cx="6.6" cy="6.6" r="4.6" fill="#d4e6f8" stroke="#8ab0d8" stroke-width="1.2"/><path d="M10 10l4.4 4.4" stroke="#c89040" stroke-width="2.2" stroke-linecap="round"/><path d="M8 8h7" stroke="#e03030" stroke-width="2.2"/></svg><svg class="a" style="left:414px;top:52.19999999999999px" width="16" height="16" viewBox="0 0 16 16"><rect x="1" y="1.5" width="11" height="9" fill="#fafafa" stroke="#9a9a9a" stroke-width="1.2"/><rect x="1" y="1.5" width="11" height="2.2" fill="#9a9a9a"/><rect x="8" y="9" width="7" height="6" rx="0.8" fill="#8a8a8a"/><path d="M9.6 9V7.6a1.9 1.9 0 013.8 0V9" fill="none" stroke="#8a8a8a" stroke-width="1.1"/></svg><svg class="a" style="left:437px;top:52.19999999999999px" width="16" height="16" viewBox="0 0 16 16"><rect x="1" y="1.5" width="11" height="9" fill="#fafafa" stroke="#9a9a9a" stroke-width="1.2"/><rect x="1" y="1.5" width="11" height="2.2" fill="#9a9a9a"/><rect x="8" y="9" width="7" height="6" rx="0.8" fill="#8a8a8a"/><path d="M9.6 9V7.6a1.9 1.9 0 013.8 0V9" fill="none" stroke="#8a8a8a" stroke-width="1.1"/></svg><svg class="a" style="left:468px;top:52.19999999999999px" width="16" height="16" viewBox="0 0 16 16"><path d="M1 2.6h9M1 5.2h7M1 7.8h6" stroke="#222" stroke-width="1.2"/><path d="M1 12.4h7" stroke="#6a9ae8" stroke-width="2"/><path d="M10 6.4h4.4v6H11" fill="none" stroke="#3a78d8" stroke-width="1.2"/><path d="M11.8 10l-2.8 2.4 2.8 2.4z" fill="#3a78d8"/></svg><svg class="a" style="left:491px;top:52.19999999999999px" width="16" height="16" viewBox="0 0 16 16"><text x="3.5" y="14" font-family="Liberation Sans,sans-serif" font-weight="bold" font-size="16" fill="#4a7ae0">¶</text></svg><svg class="a" style="left:514px;top:52.19999999999999px" width="16" height="16" viewBox="0 0 16 16"><path d="M5.6 3v9" stroke="#e03060" stroke-width="1" stroke-dasharray="1 1"/><path d="M4 1.8h11M7.4 7h8M7.4 9.6h5M4 12.2h11M4 14.6h4" stroke="#0808c0" stroke-width="1.7"/><path d="M7.4 4.4h8" stroke="#3a5ae0" stroke-width="1.7"/></svg><svg class="a" style="left:537px;top:52.19999999999999px" width="16" height="16" viewBox="0 0 16 16"><rect x="1" y="2" width="14" height="11" fill="#fff6d8" stroke="#6a8ac8" stroke-width="1"/><rect x="1" y="2" width="14" height="2.6" fill="#5a82d0"/><path d="M9.6 5.4L5 10h3l-1.6 4.6L12 9H8.6z" fill="#f6c028" stroke="#c89010" stroke-width="0.5"/></svg><svg class="a" style="left:560px;top:52.19999999999999px" width="16" height="16" viewBox="0 0 16 16"><rect x="1" y="1" width="14" height="14" rx="1" fill="#a8d088" stroke="#6a6a5a" stroke-width="1"/><path d="M2 9l4-2 3 3-3 4H2z" fill="#f0d868"/><path d="M10 2h4v5l-3 1z" fill="#c8e0f0"/><path d="M5 1.6l3.4 8-3 5M8.4 9.6l5.6-5M8.4 9.6l4.6 4.8" fill="none" stroke="#e04a28" stroke-width="1.3"/></svg><svg class="a" style="left:583px;top:52.19999999999999px" width="16" height="16" viewBox="0 0 16 16"><path d="M1.5 1h7v9.5h-7z" fill="#dce8fa" stroke="#5a82d0" stroke-width="0.9"/><path d="M4 3h7v9.5H4z" fill="#e4eefc" stroke="#5a82d0" stroke-width="0.9"/><path d="M7 5.5h5l2.5 2.5v7H7z" fill="#f0f5fd" stroke="#5a82d0" stroke-width="0.9"/></svg><svg class="a" style="left:606px;top:52.19999999999999px" width="16" height="16" viewBox="0 0 16 16"><path d="M4 1h7l3.5 3.5V15H4z" fill="#fdfdfd" stroke="#a8a8a8" stroke-width="0.8" stroke-dasharray="1.4 1"/><path d="M11 1v3.5h3.5" fill="#ececec" stroke="#a8a8a8" stroke-width="0.6"/><path d="M8.6 2.6c-2.6-.6-3 1.6-3.4 4.4S4.4 13.6 2 13.4M2.6 7.6h5.6" fill="none" stroke="#e02828" stroke-width="1.8" stroke-linecap="round"/></svg><svg class="a" style="left:629px;top:52.19999999999999px" width="16" height="16" viewBox="0 0 16 16"><path d="M1.5 3.5h5l1.2 1.6h7V14h-13z" fill="#f4b8b8" stroke="#d88080" stroke-width="0.8"/><path d="M1.5 7h13.2" stroke="#fbdcdc" stroke-width="1.2"/></svg><svg class="a" style="left:652px;top:52.19999999999999px" width="16" height="16" viewBox="0 0 16 16"><path d="M0.6 8.2Q8 0.8 15.4 8.2 8 14.8 0.6 8.2z" fill="#fbfbfb" stroke="#c8a070" stroke-width="1"/><circle cx="8" cy="7.8" r="3.3" fill="#4a90d8"/><circle cx="8" cy="7.8" r="1.5" fill="#123a70"/><circle cx="7" cy="6.8" r="0.8" fill="#fff"/></svg><svg class="a" style="left:683px;top:52.19999999999999px" width="16" height="16" viewBox="0 0 16 16"><rect x="1" y="2" width="13" height="12" fill="#fdfdfd" stroke="#8a8a8a" stroke-width="1"/><circle cx="7.5" cy="8" r="3.3" fill="#d80a0a"/></svg><svg class="a" style="left:706px;top:52.19999999999999px" width="16" height="16" viewBox="0 0 16 16"><rect x="1" y="2" width="13" height="12" fill="#fdfdfd" stroke="#9a9a9a" stroke-width="1"/><rect x="4.2" y="4.8" width="6.6" height="6.4" fill="#9c9c9c"/></svg><svg class="a" style="left:729px;top:52.19999999999999px" width="16" height="16" viewBox="0 0 16 16"><rect x="1" y="2" width="13" height="12" fill="#fdfdfd" stroke="#9a9a9a" stroke-width="1"/><path d="M5.6 4.4l5.2 3.6-5.2 3.6z" fill="#9c9c9c"/></svg><svg class="a" style="left:752px;top:52.19999999999999px" width="16" height="16" viewBox="0 0 16 16"><rect x="1" y="2" width="13" height="12" fill="#eef4ff" stroke="#3a62c8" stroke-width="1"/><path d="M3 4.4l4.6 3.6L3 11.6zM7.6 4.4l4.6 3.6-4.6 3.6z" fill="#3a6ee0"/></svg><svg class="a" style="left:775px;top:52.19999999999999px" width="16" height="16" viewBox="0 0 16 16"><rect x="1" y="1" width="11" height="11" fill="#b8b8b8"/><path d="M1 4h11M1 6.6h11M1 9.2h11M4.6 4v8M8.2 4v8" stroke="#f4f4f4" stroke-width="0.8"/><rect x="7" y="7" width="8.4" height="8.4" rx="0.8" fill="#8a8a8a"/><rect x="9" y="7" width="4.4" height="2.8" fill="#d8d8d8"/></svg><div class="a" style="left:166px;top:52px;width:1.6px;height:18px;background:#a4a4a4"></div><div class="a" style="left:243px;top:52px;width:1.6px;height:18px;background:#a4a4a4"></div><div class="a" style="left:297px;top:52px;width:1.6px;height:18px;background:#a4a4a4"></div><div class="a" style="left:351px;top:52px;width:1.6px;height:18px;background:#a4a4a4"></div><div class="a" style="left:405px;top:52px;width:1.6px;height:18px;background:#a4a4a4"></div><div class="a" style="left:459px;top:52px;width:1.6px;height:18px;background:#a4a4a4"></div><div class="a" style="left:674px;top:52px;width:1.6px;height:18px;background:#a4a4a4"></div><svg class="a" style="left:7px;top:5.5px" width="17" height="17" viewBox="0 0 16 16"><path d="M2 1h9l3 3v11H2z" fill="#fbfbfb" stroke="#7a7a7a" stroke-width="0.9"/><path d="M11 1v3h3" fill="#e4e4e4" stroke="#8a8a8a" stroke-width="0.6"/><defs><linearGradient id="ng" x1="0" y1="0" x2="0" y2="1"><stop offset="0" stop-color="#e8f4b8"/><stop offset="0.55" stop-color="#8ad030"/><stop offset="1" stop-color="#0a6a0a"/></linearGradient></defs><rect x="3.4" y="5" width="9.2" height="8.6" fill="url(#ng)"/><path d="M3 3h6" stroke="#b0b0b0" stroke-width="0.6" stroke-dasharray="0.8 0.6"/><path d="M8.6 12.4L15.2 1.6" stroke="#f0a818" stroke-width="1.8"/><circle cx="15.4" cy="1.2" r="0.9" fill="#a00818"/></svg>
<div class="a" style="left:0;top:74px;width:1200px;height:27px;background:#f0f0f0;border-top:1px solid #e2e2e2"></div>
<div class="a" style="left:2px;top:76px;width:174px;height:25px;background:#f3f3f3;border-right:2px solid #9a9a9a;border-top:4px solid #f3a848"></div>
<div class="a" style="left:24.4px;top:82px;font-family:'Liberation Mono','Noto Sans CJK SC',monospace;font-size:11.5px;line-height:16px;color:#111;white-space:pre">不透明谓词证明情况<span style="font-size:9.4px">. txt</span></div>
<svg class="a" style="left:5px;top:83px" width="14" height="14" viewBox="0 0 16 16"><rect x="1" y="1" width="14" height="14" rx="1" fill="#5a8ad8"/><rect x="3.4" y="1" width="9.2" height="5.6" fill="#f2f6fc"/><rect x="3" y="9" width="10" height="6" fill="#b8d8a0"/><rect x="9.4" y="1.8" width="2" height="3.6" fill="#5a8ad8"/></svg><svg class="a" style="left:158.6px;top:84px" width="11.4" height="11.4" viewBox="0 0 13 13"><rect x="0.5" y="0.5" width="12" height="12" fill="#bc7e98" stroke="#a0607c" stroke-width="1"/><path d="M3 3l7 7M10 3L3 10" stroke="#fff" stroke-width="2.3"/></svg>
<div class="a" style="left:3px;top:102px;width:1200px;height:494px;background:#fff;border:1px solid #a2a2a2;border-top:2px solid #8e8e8e"></div>
<div class="a" id="ed" style="left:4px;top:103.5px;width:1196px;height:490.5px;overflow:hidden;background:#fff">
<div class="a" style="left:0;top:0;width:64px;height:500px;background:#e4e4e4"></div>
<div class="a" style="left:64px;top:0;width:25px;height:500px;background:#e0e0e0"></div>
<div class="a" style="left:1154px;top:188px;width:400px;height:27px;background:#e8e8ff"></div>
<div class="a" style="left:89px;top:188px;width:1065px;height:81px;background:#c0c0c0"></div>
<div class="a" style="left:89px;top:188px;width:2px;height:27px;background:#8a2be2"></div>
<div class="ln" style="left:5.6px;top:0.4px">1005</div>
<div class="ct" style="left:90px;top:0.4px">0x1402d500f</div>
<div class="cj" style="left:258.8px;top:0.4px">是不透明谓词！</div>
<div class="cj" style="left:469.8px;top:0.4px">真实跳转谓词：</div>
<div class="ct" style="left:664px;top:0.4px">True</div>
<div class="ct" style="left:762px;top:0.4px">0x1402d500f: jb 0x14032573c</div>
<div class="ln" style="left:5.6px;top:27.4px">1006</div>
<div class="ct" style="left:90px;top:27.4px">0x140325754</div>
<div class="cj" style="left:258.8px;top:27.4px">是不透明谓词！</div>
<div class="cj" style="left:469.8px;top:27.4px">真实跳转谓词：</div>
<div class="ct" style="left:664px;top:27.4px">True</div>
<div class="ct" style="left:762px;top:27.4px">0x140325754: jbe 0x1404cac76</div>
<div class="ln" style="left:5.6px;top:54.4px">1007</div>
<div class="ct" style="left:90px;top:54.4px">0x1404cac81</div>
<div class="cj" style="left:258.8px;top:54.4px">是不透明谓词！</div>
<div class="cj" style="left:469.8px;top:54.4px">真实跳转谓词：</div>
<div class="ct" style="left:664px;top:54.4px">True</div>
<div class="ct" style="left:762px;top:54.4px">0x1404cac81: jbe 0x14026cf90</div>
<div class="ln" style="left:5.6px;top:81.4px">1008</div>
<div class="ct" style="left:90px;top:81.4px">0x140160114</div>
<div class="cj" style="left:258.8px;top:81.4px">是不透明谓词！</div>
<div class="cj" style="left:469.8px;top:81.4px">真实跳转谓词：</div>
<div class="ct" style="left:664px;top:81.4px">True</div>
<div class="ct" style="left:762px;top:81.4px">0x140160114: jb 0x1403815c9</div>
<div class="ln" style="left:5.6px;top:108.4px">1009</div>
<div class="ct" style="left:90px;top:108.4px">0x140199f09</div>
<div class="cj" style="left:258.8px;top:108.4px">是不透明谓词！</div>
<div class="cj" style="left:469.8px;top:108.4px">真实跳转谓词：</div>
<div class="ct" style="left:664px;top:108.4px">True</div>
<div class="ct" style="left:762px;top:108.4px">0x140199f09: jb 0x1404d19cc</div>
<div class="ln" style="left:5.6px;top:135.4px">1010</div>
<div class="ct" style="left:90px;top:135.4px">0x1404d19cc</div>
<div class="cj" style="left:258.8px;top:135.4px">是不透明谓词！</div>
<div class="cj" style="left:469.8px;top:135.4px">真实跳转谓词：</div>
<div class="ct" style="left:664px;top:135.4px">True</div>
<div class="ct" style="left:762px;top:135.4px">0x1404d19cc: jb 0x1402a0509</div>
<div class="ln" style="left:5.6px;top:162.4px">1011</div>
<div class="ct" style="left:90px;top:162.4px">0x1402a051c</div>
<div class="cj" style="left:258.8px;top:162.4px">是不透明谓词！</div>
<div class="cj" style="left:469.8px;top:162.4px">真实跳转谓词：</div>
<div class="ct" style="left:664px;top:162.4px">True</div>
<div class="ct" style="left:762px;top:162.4px">0x1402a051c: jg 0x14024d0ee</div>
<div class="ln" style="left:5.6px;top:189.4px">1012</div>
<div class="ct" style="left:90px;top:189.4px">0x14016395f</div>
<div class="cj" style="left:258.8px;top:189.4px">是不透明谓词！</div>
<div class="cj" style="left:469.8px;top:189.4px">真实跳转谓词：</div>
<div class="ct" style="left:664px;top:189.4px">True</div>
<div class="ct" style="left:762px;top:189.4px">0x14016395f: jg 0x14013e558</div>
<div class="ln" style="left:5.6px;top:216.4px">1013</div>
<div class="ct" style="left:90px;top:216.4px">0x14013e55e</div>
<div class="cj" style="left:258.8px;top:216.4px">是不透明谓词！</div>
<div class="cj" style="left:469.8px;top:216.4px">真实跳转谓词：</div>
<div class="ct" style="left:664px;top:216.4px">True</div>
<div class="ct" style="left:762px;top:216.4px">0x14013e55e: jp 0x14023def1</div>
<div class="ln" style="left:5.6px;top:243.4px">1014</div>
<div class="ct" style="left:90px;top:243.4px">0x14023df0a</div>
<div class="cj" style="left:258.8px;top:243.4px">是不透明谓词！</div>
<div class="cj" style="left:469.8px;top:243.4px">真实跳转谓词：</div>
<div class="ct" style="left:664px;top:243.4px">True</div>
<div class="ct" style="left:762px;top:243.4px">0x14023df0a: jne 0x1402f0491</div>
<div class="ln" style="left:5.6px;top:270.4px">1015</div>
<div class="ct" style="left:90px;top:270.4px">0x14020c74d</div>
<div class="cj" style="left:258.8px;top:270.4px">是不透明谓词！</div>
<div class="cj" style="left:469.8px;top:270.4px">真实跳转谓词：</div>
<div class="ct" style="left:664px;top:270.4px">True</div>
<div class="ct" style="left:762px;top:270.4px">0x14020c74d: js 0x1403815c9</div>
<div class="ln" style="left:5.6px;top:297.4px">1016</div>
<div class="ct" style="left:90px;top:297.4px">0x1402e6105</div>
<div class="cj" style="left:258.8px;top:297.4px">是不透明谓词！</div>
<div class="cj" style="left:469.8px;top:297.4px">真实跳转谓词：</div>
<div class="ct" style="left:664px;top:297.4px">False</div>
<div class="ct" style="left:762px;top:297.4px">0x1402e6105: jne 0x140190cc5</div>
<div class="ln" style="left:5.6px;top:324.4px">1017</div>
<div class="ct" style="left:90px;top:324.4px">0x140298750</div>
<div class="cj" style="left:258.8px;top:324.4px">是不透明谓词！</div>
<div class="cj" style="left:469.8px;top:324.4px">真实跳转谓词：</div>
<div class="ct" style="left:664px;top:324.4px">True</div>
<div class="ct" style="left:762px;top:324.4px">0x140298750: jb 0x140455ede</div>
<div class="ln" style="left:5.6px;top:351.4px">1018</div>
<div class="ct" style="left:90px;top:351.4px">0x1402ad825</div>
<div class="cj" style="left:258.8px;top:351.4px">是不透明谓词！</div>
<div class="cj" style="left:469.8px;top:351.4px">真实跳转谓词：</div>
<div class="ct" style="left:664px;top:351.4px">True</div>
<div class="ct" style="left:762px;top:351.4px">0x1402ad825: jl 0x1404a3a60</div>
<div class="ln" style="left:5.6px;top:378.4px">1019</div>
<div class="ct" style="left:90px;top:378.4px">0x140495beb</div>
<div class="cj" style="left:258.8px;top:378.4px">是不透明谓词！</div>
<div class="cj" style="left:469.8px;top:378.4px">真实跳转谓词：</div>
<div class="ct" style="left:664px;top:378.4px">False</div>
<div class="ct" style="left:762px;top:378.4px">0x140495beb: jb 0x14015eefb</div>
<div class="ln" style="left:5.6px;top:405.4px">1020</div>
<div class="ct" style="left:90px;top:405.4px">0x1402d1bba</div>
<div class="cj" style="left:258.8px;top:405.4px">是不透明谓词！</div>
<div class="cj" style="left:469.8px;top:405.4px">真实跳转谓词：</div>
<div class="ct" style="left:664px;top:405.4px">True</div>
<div class="ct" style="left:762px;top:405.4px">0x1402d1bba: jno 0x140315cda</div>
<div class="ln" style="left:5.6px;top:432.4px">1021</div>
<div class="ct" style="left:90px;top:432.4px">0x140315cda</div>
<div class="cj" style="left:258.8px;top:432.4px">是不透明谓词！</div>
<div class="cj" style="left:469.8px;top:432.4px">真实跳转谓词：</div>
<div class="ct" style="left:664px;top:432.4px">True</div>
<div class="ct" style="left:762px;top:432.4px">0x140315cda: jl 0x14026e0b9</div>
<div class="ln" style="left:5.6px;top:459.4px">1022</div>
<div class="ct" style="left:90px;top:459.4px">0x14026e0e7</div>
<div class="cj" style="left:258.8px;top:459.4px">是不透明谓词！</div>
<div class="cj" style="left:469.8px;top:459.4px">真实跳转谓词：</div>
<div class="ct" style="left:664px;top:459.4px">True</div>
<div class="ct" style="left:762px;top:459.4px">0x14026e0e7: ja 0x14013709c</div>
<div class="ln" style="left:5.6px;top:486.4px">1023</div>
<div class="ct" style="left:90px;top:486.4px">0x14013709c</div>
<div class="cj" style="left:258.8px;top:486.4px">是不透明谓词！</div>
<div class="cj" style="left:469.8px;top:486.4px">真实跳转谓词：</div>
</div>
<div class="a" style="left:0;top:597px;width:1200px;height:23px;background:#f0f0f0;border-top:1px solid #d0d0d0"></div>
<div class="a ui sb" style="left:2.5px;top:602px;font-size:12.3px;letter-spacing:0.47px;line-height:17px;color:#1a1a1a;white-space:pre">Normal text file</div>
<div class="a ui sb" style="left:486.9px;top:602px;font-size:12.3px;letter-spacing:0.22px;line-height:17px;color:#1a1a1a;white-space:pre">length : 108,840</div>
<div class="a ui sb" style="left:595.0px;top:602px;font-size:12.3px;letter-spacing:0.1px;line-height:17px;color:#1a1a1a;white-space:pre">lines : 1,226</div>
<div class="a ui sb" style="left:706.7px;top:602px;font-size:12.3px;letter-spacing:0px;line-height:17px;color:#1a1a1a;white-space:pre">Ln : 1,012</div>
<div class="a ui sb" style="left:778.0px;top:602px;font-size:12.3px;letter-spacing:0.06px;line-height:17px;color:#1a1a1a;white-space:pre">Col : 1</div>
<div class="a ui sb" style="left:831.0px;top:602px;font-size:12.3px;letter-spacing:0.12px;line-height:17px;color:#1a1a1a;white-space:pre">Sel : 191 | 3</div>
<div class="a ui sb" style="left:967.0px;top:602px;font-size:12.3px;letter-spacing:0px;line-height:17px;color:#1a1a1a;white-space:pre">Windows (CR LF)</div>
<div class="a ui sb" style="left:1077.0px;top:602px;font-size:12.3px;letter-spacing:-0.17px;line-height:17px;color:#1a1a1a;white-space:pre">UTF-8</div>
<div class="a" style="left:482px;top:599px;width:1px;height:20px;background:#d4d4d4"></div>
<div class="a" style="left:702px;top:599px;width:1px;height:20px;background:#d4d4d4"></div>
<div class="a" style="left:960px;top:599px;width:1px;height:20px;background:#d4d4d4"></div>
<div class="a" style="left:1072px;top:599px;width:1px;height:20px;background:#d4d4d4"></div>
</div>
<div class="a" style="left:0;top:0;width:1864px;height:906px;opacity:.21;pointer-events:none"><svg class="a" style="left:1647px;top:804px" width="80" height="80" viewBox="-40 -40 80 80"><g transform="rotate(0)"><path d="M0 -7.5V-35.5" stroke="#fff" stroke-width="4.6"/><path d="M0 -20l-11.5 -8.5M0 -20l11.5 -8.5" stroke="#fff" stroke-width="4.2" fill="none"/></g><g transform="rotate(-60)"><path d="M0 -7.5V-35.5" stroke="#fff" stroke-width="4.6"/><path d="M0 -20l-11.5 -8.5M0 -20l11.5 -8.5" stroke="#fff" stroke-width="4.2" fill="none"/></g><g transform="rotate(-120)"><path d="M0 -7.5V-35.5" stroke="#fff" stroke-width="4.6"/><path d="M0 -20l-11.5 -8.5M0 -20l11.5 -8.5" stroke="#fff" stroke-width="4.2" fill="none"/></g><g transform="rotate(-180)"><path d="M0 -7.5V-35.5" stroke="#fff" stroke-width="4.6"/><path d="M0 -20l-11.5 -8.5M0 -20l11.5 -8.5" stroke="#fff" stroke-width="4.2" fill="none"/></g><g transform="rotate(-240)"><path d="M0 -7.5V-35.5" stroke="#fff" stroke-width="4.6"/><path d="M0 -20l-11.5 -8.5M0 -20l11.5 -8.5" stroke="#fff" stroke-width="4.2" fill="none"/></g><g stroke="#fff" stroke-width="1.1" fill="none"><path d="M7 -5L30 -18.5"/><path d="M7.6 -3.6L26 -14 31.5 -2.5"/><path d="M9 -1.6L20 -8 31 2.4 22 10"/><path d="M2.4 -21L13 -31.5"/><path d="M16 -27.5V-17"/></g><g fill="#fff"><circle cx="30.5" cy="-18.8" r="1.3"/><circle cx="31.6" cy="-2.2" r="1.3"/><circle cx="31.4" cy="2.6" r="1.3"/><circle cx="13.4" cy="-31.8" r="1.3"/><circle cx="16" cy="-28" r="1.2"/></g><polygon points="7.60,-0.00 3.80,-6.58 -3.80,-6.58 -7.60,-0.00 -3.80,6.58 3.80,6.58" fill="none" stroke="#fff" stroke-width="4.2"/></svg><div class="a" style="left:1728.5px;top:801px;font-family:'Noto Sans CJK SC',sans-serif;font-weight:400;font-size:59px;line-height:80px;color:#fff;white-space:pre;letter-spacing:0">看雪</div></div>
</body></html>
